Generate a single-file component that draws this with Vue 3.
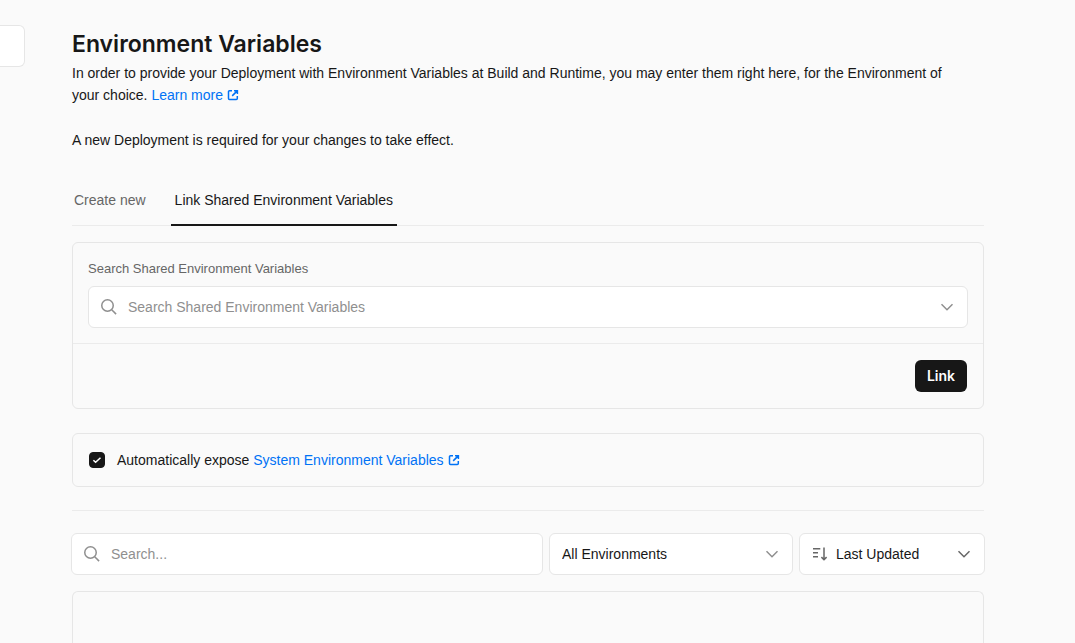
<script setup>
import { ref } from 'vue'

const tabs = ['Create new', 'Link Shared Environment Variables']
const activeTab = ref(1)
const sharedQuery = ref('')
const query = ref('')
const environment = ref('All Environments')
const order = ref('Last Updated')
const expose = ref(true)
</script>

<template>
  <div class="page">
    <aside class="sidebar" aria-label="Settings navigation"><div class="side-box"></div></aside>
    <main class="content">
      <h1>Environment Variables</h1>
      <p class="intro">
        <span>In order to provide your Deployment with Environment Variables at Build and Runtime, you may enter them right
        here, for the Environment of </span>
        <span>your choice. </span>
        <a href="#learn" class="link">Learn more<svg class="external" viewBox="0 0 12 12" aria-hidden="true"><path d="M5 1.7H2.5a1 1 0 0 0-1 1v6.8a1 1 0 0 0 1 1h6.8a1 1 0 0 0 1-1V7M7 1.7h3.4v3.4M10.2 1.9 5.2 6.9" /></svg></a>
      </p>
      <p class="note">A new Deployment is required for your changes to take effect.</p>

      <div class="tabs" role="tablist">
        <button
          v-for="(tab, i) in tabs"
          :key="tab"
          type="button"
          role="tab"
          class="tab"
          :class="{ active: activeTab === i }"
          :aria-selected="activeTab === i"
          @click="activeTab = i"
        >{{ tab }}</button>
      </div>

      <section class="card shared">
        <div class="shared-body">
          <label for="shared-search">Search Shared Environment Variables</label>
          <div class="field">
            <svg class="search" viewBox="0 0 16 16" aria-hidden="true"><circle cx="6.5" cy="6.5" r="5.75" /><path d="m10.7 10.7 4.4 4.4" /></svg>
            <input id="shared-search" v-model="sharedQuery" type="text" placeholder="Search Shared Environment Variables" />
            <svg class="chevron" viewBox="0 0 14 14" aria-hidden="true"><path d="m1.5 4.2 5.5 5.5 5.5-5.5" /></svg>
          </div>
        </div>
        <div class="shared-foot">
          <button type="button" class="primary">Link</button>
        </div>
      </section>

      <section class="card expose">
        <span class="check">
          <input id="expose" v-model="expose" type="checkbox" />
          <svg viewBox="0 0 16 16" aria-hidden="true"><path d="m4.4 8.2 2.2 2.1 4.9-4.6" /></svg>
        </span>
        <div class="expose-text">
          <label for="expose">Automatically expose</label>{{ ' ' }}<a href="#system" class="link">System Environment Variables<svg class="external" viewBox="0 0 12 12" aria-hidden="true"><path d="M5 1.7H2.5a1 1 0 0 0-1 1v6.8a1 1 0 0 0 1 1h6.8a1 1 0 0 0 1-1V7M7 1.7h3.4v3.4M10.2 1.9 5.2 6.9" /></svg></a>
        </div>
      </section>

      <hr />

      <div class="filters">
        <div class="field">
          <svg class="search" viewBox="0 0 16 16" aria-hidden="true"><circle cx="6.5" cy="6.5" r="5.75" /><path d="m10.7 10.7 4.4 4.4" /></svg>
          <input v-model="query" type="text" placeholder="Search..." aria-label="Search variables" />
        </div>
        <div class="picker environments">
          <select v-model="environment" aria-label="Environment">
            <option>All Environments</option>
            <option>Production</option>
            <option>Preview</option>
            <option>Development</option>
          </select>
          <svg class="chevron" viewBox="0 0 14 14" aria-hidden="true"><path d="m1.5 4.2 5.5 5.5 5.5-5.5" /></svg>
        </div>
        <div class="picker order">
          <svg class="sort" viewBox="0 0 16 16" aria-hidden="true"><path d="M1 2.7h7.3M1 6.7h5M1 10.7h5M12 1.5v12M9.4 11.1l2.6 2.6 2.6-2.6" /></svg>
          <select v-model="order" aria-label="Sort order">
            <option>Last Updated</option>
            <option>Name</option>
          </select>
          <svg class="chevron dark" viewBox="0 0 14 14" aria-hidden="true"><path d="m1.5 4.2 5.5 5.5 5.5-5.5" /></svg>
        </div>
      </div>

      <section class="card list" aria-label="Variables"></section>
    </main>
  </div>
</template>

<style>
body {
  margin: 0;
  background: #fafafa;
}
</style>

<style scoped>
* {
  box-sizing: border-box;
}
.page {
  display: flex;
  height: 100vh;
  overflow: hidden;
  font-family: "Liberation Sans", Arial, sans-serif;
  font-size: 14px;
  line-height: 20px;
  color: #171717;
}
.sidebar {
  flex: none;
  width: 25px;
  padding-top: 25px;
}
.side-box {
  height: 42px;
  border: 1px solid #e6e6e6;
  border-left: 0;
  border-radius: 0 6px 6px 0;
  background: #fff;
}
.content {
  flex: 1;
  min-width: 0;
  display: flex;
  flex-direction: column;
  margin: 28px 91px 0 47px;
}
h1 {
  margin: 0;
  font-family: Inter, "Liberation Sans", sans-serif;
  font-size: 23px;
  line-height: 32px;
  font-weight: 600;
}
p {
  margin: 0;
  line-height: 22px;
}
.intro {
  margin-top: 2px;
  padding-right: 16px;
}
.note {
  margin-top: 23px;
}
.link {
  color: #0072f5;
  text-decoration: none;
}
svg {
  flex: none;
  fill: none;
  stroke: #8f8f8f;
  stroke-width: 1.5;
}
.external {
  width: 12px;
  height: 12px;
  margin-left: 4px;
  vertical-align: -1px;
  stroke: #0072f5;
}
button,
input,
select {
  margin: 0;
  font: inherit;
  color: inherit;
}
.tabs {
  display: flex;
  gap: 23px;
  margin-top: 26px;
  border-bottom: 1px solid #ebebeb;
}
.tab {
  padding: 13px 2px 14px;
  margin-bottom: -1px;
  border: 0;
  border-bottom: 2px solid transparent;
  background: none;
  color: #666;
}
.tab.active {
  padding: 13px 4px 14px;
  color: #171717;
  border-color: #171717;
}
.card {
  flex: none;
  border: 1px solid #e6e6e6;
  border-radius: 6px;
}
.shared {
  margin-top: 16px;
}
.shared-body {
  padding: 16px 15px 15px;
}
.shared-body label {
  display: block;
  margin-bottom: 7px;
  font-size: 13px;
  color: #666;
}
.field,
.picker {
  display: flex;
  align-items: center;
  height: 42px;
  padding: 0 12px;
  border: 1px solid #e6e6e6;
  border-radius: 6px;
  background: #fff;
}
.field input {
  flex: 1;
  min-width: 0;
  padding: 0;
  margin-left: 11px;
  border: 0;
  outline: 0;
  background: none;
}
.field input::placeholder {
  color: #8f8f8f;
  opacity: 1;
}
.search {
  width: 16px;
  height: 16px;
}
.chevron {
  width: 14px;
  height: 14px;
}
.shared .field {
  padding-right: 13px;
}
.shared-foot {
  display: flex;
  justify-content: flex-end;
  padding: 16px;
  border-top: 1px solid #ebebeb;
}
.primary {
  height: 32px;
  padding: 0 12px;
  border: 0;
  border-radius: 6px;
  background: #171717;
  color: #fff;
  font-family: Inter, "Liberation Sans", sans-serif;
  font-weight: 600;
}
.expose {
  display: flex;
  align-items: center;
  gap: 12px;
  margin-top: 24px;
  padding: 16px;
}
.check {
  display: grid;
}
.check > * {
  grid-area: 1 / 1;
  width: 16px;
  height: 16px;
}
.check input {
  appearance: none;
  border: 1px solid #171717;
  border-radius: 4px;
  background: #fff;
}
.check input:checked {
  background: #171717;
}
.check svg {
  stroke: #fff;
  pointer-events: none;
}
hr {
  flex: none;
  width: 100%;
  height: 1px;
  margin: 23px 0 22px;
  border: 0;
  background: #ebebeb;
}
.filters {
  display: flex;
  gap: 6px;
  margin: 0 -1px;
}
.filters .field {
  flex: 1;
}
select {
  flex: 1;
  min-width: 0;
  height: 100%;
  padding: 0;
  border: 0;
  outline: 0;
  appearance: none;
  background: none;
}
.environments {
  width: 244px;
  padding-right: 13px;
}
.order {
  width: 186px;
  padding-right: 13px;
}
.sort {
  width: 16px;
  height: 16px;
  margin-right: 8px;
  stroke: #666;
}
.dark {
  stroke: #666;
}
.list {
  flex: 1;
  margin-top: 16px;
  border-bottom: 0;
  border-radius: 6px 6px 0 0;
}
</style>
